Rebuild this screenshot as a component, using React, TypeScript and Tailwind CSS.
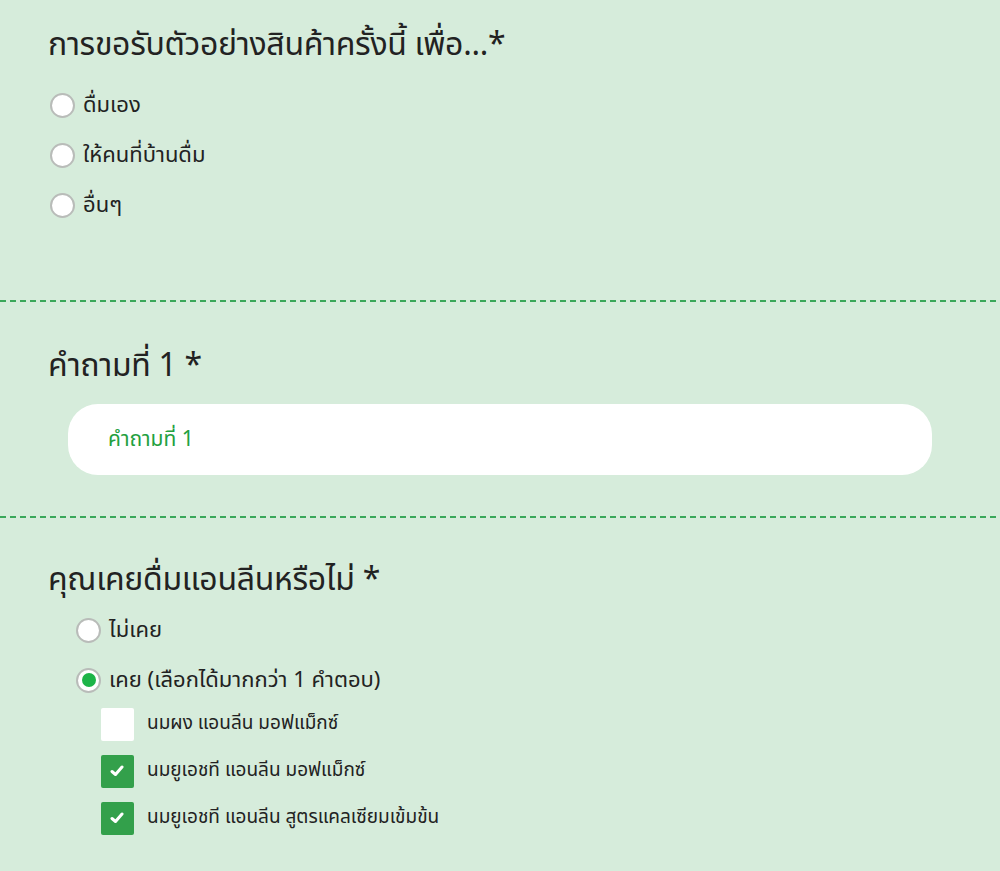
// Sample request form: Thai questionnaire with radios, text input and checkboxes

const font = { fontFamily: '"Noto Sans Thai", "Noto Sans", "Liberation Sans", sans-serif' };

function Radio({ checked = false }: { checked?: boolean }) {
  return (
    <span className="flex h-[25px] w-[25px] shrink-0 items-center justify-center rounded-full border-2 border-[#b9bcb9] bg-white">
      {checked && <span className="h-[14px] w-[14px] rounded-full bg-[#1db448]" />}
    </span>
  );
}

function Checkbox({ checked = false }: { checked?: boolean }) {
  return (
    <span
      className={
        checked
          ? 'flex h-[33px] w-[33px] shrink-0 items-center justify-center rounded-[2px] bg-[#33a04b]'
          : 'flex h-[33px] w-[33px] shrink-0 items-center justify-center rounded-[2px] bg-white'
      }
    >
      {checked && (
        <svg width="14" height="12" viewBox="0 0 14 12" className="-mt-[2px] -ml-[2px]">
          <path d="M2 6.5 L5.5 9.5 L12 2" fill="none" stroke="white" strokeWidth="3" strokeLinecap="round" strokeLinejoin="round" />
        </svg>
      )}
    </span>
  );
}

function Divider() {
  return <div className="h-[2px] w-full bg-[linear-gradient(to_right,#3aa85a_60%,transparent_60%)] bg-[length:10px_2px]" />;
}

export default function App() {
  return (
    <div className="min-h-screen w-full bg-[#d6ecdb] text-[#222]" style={font}>
      {/* Section 1 */}
      <section className="px-[48px] pt-[25px] pb-[70px]">
        <h2 className="h-[40px] text-[32px] leading-[40px] tracking-[-0.3px]">การขอรับตัวอย่างสินค้าครั้งนี้ เพื่อ...*</h2>
        <div className="mt-[15px] flex flex-col">
          {['ดื่มเอง', 'ให้คนที่บ้านดื่ม', 'อื่นๆ'].map((t) => (
            <label key={t} className="flex h-[50px] items-center gap-[8px] pl-[2px] text-[22px]">
              <Radio />
              <span>{t}</span>
            </label>
          ))}
        </div>
      </section>

      <Divider />

      {/* Section 2 */}
      <section className="px-[48px] pt-[44px] pb-[41px]">
        <h2 className="h-[40px] text-[32px] leading-[40px] tracking-[-0.3px]">คำถามที่ 1 *</h2>
        <div className="mt-[18px] ml-[20px] mr-[20px] flex h-[71px] items-center rounded-[30px] bg-white px-[40px]">
          <span className="text-[21px] text-[#23a03e]">คำถามที่ 1</span>
        </div>
      </section>

      <Divider />

      {/* Section 3 */}
      <section className="px-[48px] pt-[42px] pb-[30px]">
        <h2 className="h-[40px] text-[32px] leading-[40px] tracking-[-0.3px]">คุณเคยดื่มแอนลีนหรือไม่ *</h2>
        <div className="mt-[5px] flex flex-col pl-[28px]">
          <label className="flex h-[50px] items-center gap-[8px] text-[22px]">
            <Radio />
            <span>ไม่เคย</span>
          </label>
          <label className="flex h-[50px] items-center gap-[8px] text-[22px]">
            <Radio checked />
            <span>เคย (เลือกได้มากกว่า 1 คำตอบ)</span>
          </label>
          <div className="mt-[3px] flex flex-col gap-[14px] pl-[25px]">
            {[
              { t: 'นมผง แอนลีน มอฟแม็กซ์', c: false },
              { t: 'นมยูเอชที แอนลีน มอฟแม็กซ์', c: true },
              { t: 'นมยูเอชที แอนลีน สูตรแคลเซียมเข้มข้น', c: true },
            ].map((o) => (
              <label key={o.t} className="flex items-center gap-[13px] text-[19px]">
                <Checkbox checked={o.c} />
                <span>{o.t}</span>
              </label>
            ))}
          </div>
        </div>
      </section>
    </div>
  );
}
